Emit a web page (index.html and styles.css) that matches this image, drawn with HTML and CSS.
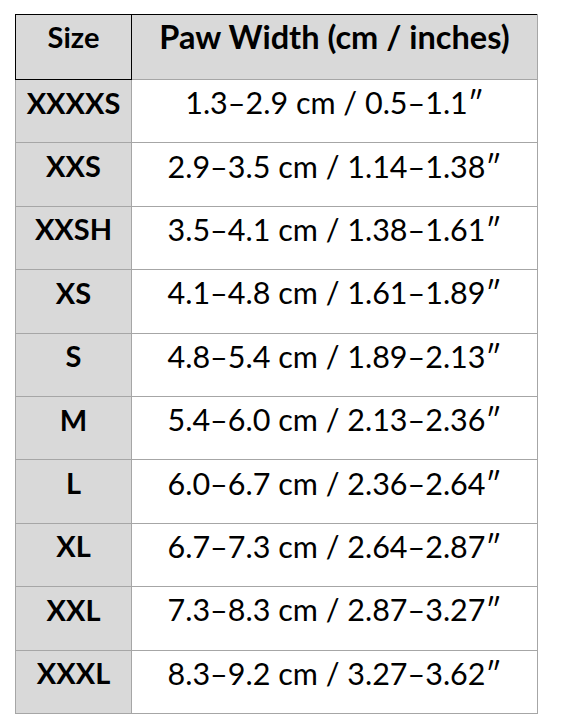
FILE: index.html
```html
<!DOCTYPE html>
<html>
<head>
<meta charset="utf-8">
<link rel="stylesheet" href="styles.css">
</head>
<body>
<table class="chart">
  <thead>
    <tr class="head-row">
      <th class="size-head">Size</th>
      <th class="paw-head">Paw Width (cm / inches)</th>
    </tr>
  </thead>
  <tbody>
    <tr><td class="size">XXXXS</td><td class="paw">1.3–2.9 cm / 0.5–1.1″</td></tr>
    <tr><td class="size">XXS</td><td class="paw">2.9–3.5 cm / 1.14–1.38″</td></tr>
    <tr><td class="size">XXSH</td><td class="paw">3.5–4.1 cm / 1.38–1.61″</td></tr>
    <tr><td class="size">XS</td><td class="paw">4.1–4.8 cm / 1.61–1.89″</td></tr>
    <tr><td class="size">S</td><td class="paw">4.8–5.4 cm / 1.89–2.13″</td></tr>
    <tr><td class="size">M</td><td class="paw">5.4–6.0 cm / 2.13–2.36″</td></tr>
    <tr><td class="size">L</td><td class="paw">6.0–6.7 cm / 2.36–2.64″</td></tr>
    <tr><td class="size">XL</td><td class="paw">6.7–7.3 cm / 2.64–2.87″</td></tr>
    <tr><td class="size">XXL</td><td class="paw">7.3–8.3 cm / 2.87–3.27″</td></tr>
    <tr><td class="size">XXXL</td><td class="paw">8.3–9.2 cm / 3.27–3.62″</td></tr>
  </tbody>
</table>
</body>
</html>
```
FILE: styles.css
```css
html, body {
  margin: 0;
  background: #ffffff;
}
body {
  padding: 14px 0 0 15px;
  font-family: "Lato", "Open Sans", sans-serif;
  color: #000;
}
.chart {
  border-collapse: collapse;
  table-layout: fixed;
  width: 523px;
}
.chart th, .chart td {
  padding: 0 0 18px 0;
  text-align: center;
  vertical-align: middle;
  box-sizing: border-box;
}
.head-row {
  height: 65px;
}
.chart th {
  background: #d9d9d9;
  font-weight: 700;
  font-size: 29px;
  padding-bottom: 22px;
}
.size-head {
  width: 116px;
  border: 1px solid #000;
}
.paw-head {
  font-size: 32.5px;
  border-top: 1px solid #000;
  border-right: 1px solid #a6a6a6;
  border-bottom: 1px solid #a6a6a6;
}
.chart th.paw-head {
  font-size: 32.5px;
}
.chart tbody tr {
  height: 63.4px;
}
.chart td {
  border: 1px solid #a6a6a6;
}
.size {
  background: #d9d9d9;
  font-weight: 700;
  font-size: 29px;
}
.paw {
  font-size: 30.5px;
  font-weight: 400;
}
```
